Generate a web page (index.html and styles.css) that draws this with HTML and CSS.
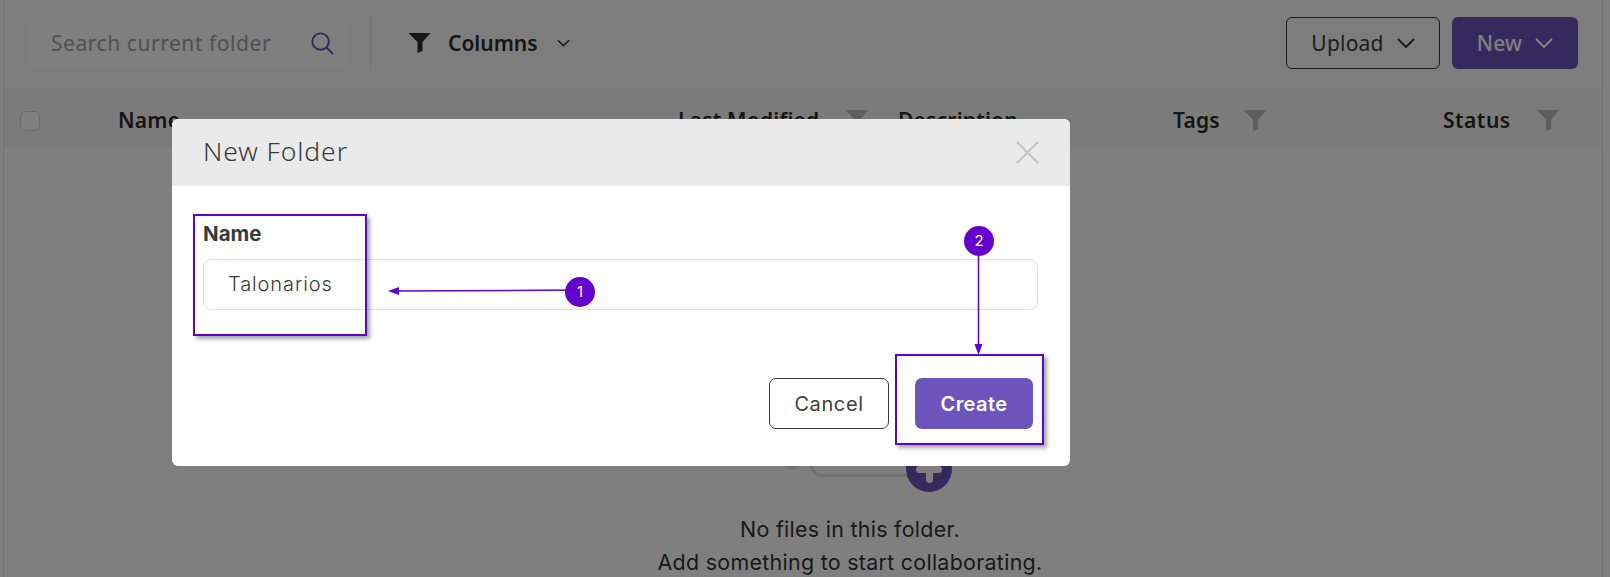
FILE: index.html
```html
<!DOCTYPE html>
<html lang="en">
<head>
<meta charset="utf-8">
<title>New Folder</title>
<link rel="stylesheet" href="styles.css">
</head>
<body>
<div class="page">
  <header class="toolbar">
    <div class="search">
      <span class="search-text">Search current folder</span>
      <svg class="search-icon" viewBox="0 0 24 24"><circle cx="10" cy="10" r="8.6"/><path d="M16.2 16.2 23 23"/></svg>
    </div>
    <div class="divider"></div>
    <div class="columns">
      <svg class="funnel" viewBox="0 0 22 20"><path d="M0 0h22l-8 9v9l-5 2V9z"/></svg>
      <span>Columns</span>
      <svg class="chev-small" viewBox="0 0 14 8"><path d="M1 1l6 6 6-6"/></svg>
    </div>
    <div class="actions">
      <button class="btn btn-upload">Upload<svg class="chev" viewBox="0 0 18 10"><path d="M1 1l8 8 8-8"/></svg></button>
      <button class="btn btn-new">New<svg class="chev" viewBox="0 0 18 10"><path d="M1 1l8 8 8-8"/></svg></button>
    </div>
  </header>
  <div class="thead">
    <span class="check"></span>
    <span class="th th-name">Name</span>
    <span class="sort"></span>
    <span class="th th-mod">Last Modified</span>
    <svg class="th-filter f-mod" viewBox="0 0 22 20"><path d="M0 0h22l-8 9v9l-5 2V9z"/></svg>
    <span class="th th-desc">Description</span>
    <span class="th th-tags">Tags</span>
    <svg class="th-filter f-tags" viewBox="0 0 22 20"><path d="M0 0h22l-8 9v9l-5 2V9z"/></svg>
    <span class="th th-status">Status</span>
    <svg class="th-filter f-status" viewBox="0 0 22 20"><path d="M0 0h22l-8 9v9l-5 2V9z"/></svg>
  </div>
  <main class="empty">
    <div class="illustration">
      <span class="ill-dot"></span>
      <span class="ill-card"></span>
      <span class="ill-plus"></span>
    </div>
    <p class="empty-text">No files in this folder.</p>
    <p class="empty-text">Add something to start collaborating.</p>
  </main>
</div>

<div class="backdrop"></div>

<section class="modal">
  <div class="modal-head">
    <h2 class="modal-title">New Folder</h2>
    <svg class="close" viewBox="0 0 24 24"><path d="M1 1l22 22M23 1 1 23"/></svg>
  </div>
  <div class="modal-body">
    <label class="label">Name</label>
    <div class="input">Talonarios</div>
    <div class="modal-foot">
      <button class="mbtn mbtn-cancel">Cancel</button>
      <button class="mbtn mbtn-create">Create</button>
    </div>
  </div>
</section>

<div class="mark mark-1"></div>
<div class="mark mark-2"></div>
<svg class="arrows" viewBox="0 0 1610 577">
  <path class="arrow-line" d="M580 290 398 291"/>
  <path class="arrow-head" d="M388 291l11-4v8z"/>
  <path class="arrow-line" d="M978.500 241V346"/>
  <path class="arrow-head" d="M978.500 355l-4-11h8z"/>
</svg>
<span class="badge badge-1">1</span>
<span class="badge badge-2">2</span>
</body>
</html>
```

FILE: styles.css
```css
* { box-sizing: border-box; }
html, body { margin: 0; height: 577px; overflow: hidden; }
body { background: #fff; font-family: Inter, "Liberation Sans", sans-serif; color: #2f2f2f; position: relative; }

.page { margin: 0 7px 0 3px; height: 577px; border-left: 1px solid #e6e6e6; border-right: 1px solid #e6e6e6; background: #fff; }

.toolbar { height: 88px; padding: 17px 24px 0 23px; display: flex; align-items: flex-start; background: #fafafa; }
.search { width: 321px; height: 52px; background: #fefefe; border-radius: 6px; display: flex; align-items: center; padding: 0 14px 0 24px; justify-content: space-between; }
.search-text { font-family: "Noto Sans", sans-serif; font-size: 21px; letter-spacing: 0.55px; color: #a3a3a3; }
.search-icon { width: 23px; height: 23px; fill: none; stroke: #6b55bd; stroke-width: 2; }
.divider { width: 1px; height: 53px; background: #e6e6e6; margin-left: 22px; }
.columns { display: flex; align-items: center; height: 52px; margin-left: 37px; font-family: "Noto Sans", sans-serif; font-weight: 600; font-size: 21px; color: #2c2c2c; }
.funnel { width: 23px; height: 20px; fill: #2c2c2c; margin-right: 17px; }
.chev-small { width: 13px; height: 8px; margin-left: 19px; fill: none; stroke: #2c2c2c; stroke-width: 1.6; }
.actions { margin-left: auto; display: flex; gap: 12px; }
.btn { height: 52px; border-radius: 6px; font-family: "Noto Sans", sans-serif; font-size: 21px; letter-spacing: 0.2px; display: flex; align-items: center; justify-content: center; gap: 13px; padding: 0; }
.btn-upload { width: 154px; background: transparent; border: 1px solid #3a3a3a; color: #3a3a3a; }
.btn-new { width: 126px; background: #6b55bd; border: 0; color: #fff; font-weight: 500; }
.chev { width: 18px; height: 10px; fill: none; stroke-width: 2; }
.btn-upload .chev { stroke: #3a3a3a; }
.btn-new .chev { stroke: #fff; }

.thead { position: relative; height: 61px; background: #f7f7f7; }
.check { position: absolute; left: 16px; top: 23px; width: 20px; height: 20px; border: 1px solid #d6d6d6; border-radius: 5px; background: #fff; }
.th { position: absolute; top: 19px; font-family: "Noto Sans", sans-serif; font-weight: 600; font-size: 21px; letter-spacing: 0.2px; line-height: 26px; color: #2c2c2c; }
.th-name { left: 114px; }
.th-mod { left: 674px; }
.th-desc { left: 894px; }
.th-tags { left: 1169px; }
.th-status { left: 1439px; letter-spacing: 0.5px; }
.sort { position: absolute; left: 639px; top: 28px; border: 4px solid transparent; border-bottom-color: #6b55bd; }
.th-filter { position: absolute; top: 22px; width: 24px; height: 21px; fill: #bdbdbd; }
.f-mod { left: 841px; }
.f-tags { left: 1239px; }
.f-status { left: 1532px; }

.empty { display: flex; flex-direction: column; align-items: center; padding-left: 94px; }
.illustration { position: relative; width: 240px; height: 342px; }
.ill-dot { position: absolute; left: 50px; top: 296px; width: 24px; height: 24px; border-radius: 50%; background: #e8e8e8; }
.ill-card { position: absolute; left: 80px; top: 270px; width: 110px; height: 58px; border: 3px solid #e0e0e0; border-radius: 12px; }
.ill-plus { position: absolute; left: 176px; top: 297px; width: 46px; height: 46px; border-radius: 50%; background: #6b55bd; }
.ill-plus::before { content: ""; position: absolute; left: 10px; top: 20px; width: 26px; height: 7px; border-radius: 3.500px; background: #fff; }
.ill-plus::after { content: ""; position: absolute; left: 19.500px; top: 10px; width: 7px; height: 27px; border-radius: 3.500px; background: #fff; }
.empty-text { margin: 0; font-size: 21.400px; line-height: 33px; color: #333; letter-spacing: 0.3px; }
.empty-text:first-of-type { margin-top: 22px; }

.backdrop { position: absolute; inset: 0; background: rgba(0, 0, 0, .5); }

.modal { position: absolute; left: 172px; top: 119px; width: 898px; height: 347px; background: #fff; border-radius: 6px; overflow: hidden; }
.modal-head { height: 67px; background: #eaeaea; display: flex; align-items: center; justify-content: space-between; padding: 0 31px; }
.modal-title { margin: 0 0 3px; font-family: "Noto Sans", sans-serif; font-weight: 300; font-size: 26.500px; color: #3a3a3a; letter-spacing: 0.9px; }
.close { width: 23px; height: 23px; fill: none; stroke: #c2c2c2; stroke-width: 2; }
.modal-body { padding: 36px 32px 0 31px; }
.label { display: block; font-weight: 700; font-size: 20.500px; line-height: 24px; color: #3a3a3a; }
.input { margin-top: 13px; height: 51px; border: 1px solid #e1e1e1; border-radius: 8px; padding: 0 24px; font-size: 20px; font-weight: 300; letter-spacing: 0.9px; line-height: 49px; color: #3a3a3a; }
.modal-foot { display: flex; justify-content: flex-end; gap: 26px; margin-top: 68px; padding-right: 5px; }
.mbtn { height: 51px; border-radius: 7px; font-family: Inter, sans-serif; font-size: 20px; letter-spacing: 0.6px; padding: 0; }
.mbtn-cancel { width: 120px; border: 1px solid #3a3a3a; background: #fff; color: #3f3f3f; }
.mbtn-create { width: 118px; border: 0; background: #6b55bd; color: #fff; font-weight: 600; letter-spacing: 0.4px; }

.mark { position: absolute; border: 2px solid #6600cc; box-shadow: 3px 3px 4px rgba(0, 0, 0, .35); }
.mark-1 { left: 193px; top: 214px; width: 174px; height: 122px; }
.mark-2 { left: 895px; top: 354px; width: 149px; height: 91px; }
.arrows { position: absolute; left: 0; top: 0; width: 1610px; height: 577px; }
.arrow-line { fill: none; stroke: #6600cc; stroke-width: 1.500; }
.arrow-head { fill: #6600cc; }
.badge { position: absolute; width: 30px; height: 30px; border-radius: 50%; background: #6600cc; color: #fff; font-size: 15px; line-height: 30px; text-align: center; }
.badge-1 { left: 565px; top: 277px; }
.badge-2 { left: 964px; top: 226px; }
```
